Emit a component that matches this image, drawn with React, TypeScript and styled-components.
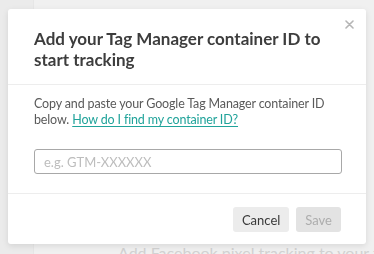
import React from 'react';
import styled, {createGlobalStyle} from 'styled-components';

const App: React.FC = () => {
  return (
    <>
      <GlobalStyle/>
      <Page>
        <SideStrip/>
        <Content>
          <GhostLine>Add Facebook pixel tracking to your typeform</GhostLine>
        </Content>
      </Page>
      <Overlay>
        <Modal>
          <CloseButton aria-label="Close">
            <svg width="9" height="9" viewBox="0 0 9 9">
              <path d="M1 1 L8 8 M8 1 L1 8" stroke="#b5b5b5" strokeWidth="1.6" strokeLinecap="round"/>
            </svg>
          </CloseButton>
          <Header>
            <Title>Add your Tag Manager container ID to start tracking</Title>
          </Header>
          <Body>
            <Text>
              Copy and paste your Google Tag Manager container ID below.{' '}
              <Link href="#">How do I find my container ID?</Link>
            </Text>
            <Input placeholder="e.g. GTM-XXXXXX" autoFocus/>
          </Body>
          <Footer>
            <Button>Cancel</Button>
            <Button $disabled>Save</Button>
          </Footer>
        </Modal>
      </Overlay>
    </>
  );
}

const GlobalStyle = createGlobalStyle`
  body {
    margin: 0;
    font-family: Lato, "Helvetica Neue", Arial, sans-serif;
    -webkit-font-smoothing: antialiased;
  }
`;

const Page = styled.div`
  display: flex;
  width: 374px;
  height: 254px;
  overflow: hidden;
  background: #f0f0f0;
`

const SideStrip = styled.div`
  width: 33px;
  flex: none;
  background: #ebebeb;
  border-right: 1px solid #e6e6e6;
`

const Content = styled.div`
  flex: 1;
  min-width: 0;
  display: flex;
  flex-direction: column;
  justify-content: flex-end;
  padding: 0 0 0 84px;
  overflow: hidden;
`

const GhostLine = styled.div`
  font-size: 16px;
  line-height: 16px;
  height: 9px;
  overflow: hidden;
  color: #d2d2d2;
  white-space: nowrap;
`

const Overlay = styled.div`
  position: fixed;
  inset: 0;
  display: flex;
  align-items: flex-start;
  padding: 9px 0 0 8px;
`

const Modal = styled.div`
  position: relative;
  width: 358px;
  background: #fff;
  border-radius: 3px;
  box-shadow: 0 2px 6px rgba(0, 0, 0, 0.1);
  display: flex;
  flex-direction: column;
`

const CloseButton = styled.button`
  position: absolute;
  top: 11px;
  right: 12px;
  padding: 0;
  border: 0;
  background: none;
  line-height: 0;
  cursor: pointer;
`

const Header = styled.div`
  padding: 19px 20px 14px 26px;
  border-bottom: 1px solid #ededed;
`

const Title = styled.h2`
  margin: 0;
  font-size: 17px;
  line-height: 21px;
  font-weight: 700;
  color: #3d3d3d;
`

const Body = styled.div`
  padding: 11px 25px 19px 26px;
  border-bottom: 1px solid #ededed;
`

const Text = styled.p`
  margin: 0 0 21px;
  font-size: 12.5px;
  letter-spacing: -0.15px;
  line-height: 16px;
  color: #5a5a5a;
`

const Link = styled.a`
  color: #20a39a;
  text-decoration: underline;
  text-underline-offset: 2px;
`

const Input = styled.input`
  box-sizing: border-box;
  display: block;
  width: 308px;
  height: 25px;
  padding: 0 9px;
  border: 1px solid #a8a8a8;
  border-radius: 3px;
  font-family: inherit;
  font-size: 13px;
  color: #333;
  outline: none;
  &::placeholder {
    color: #bdbdbd;
  }
`

const Footer = styled.div`
  display: flex;
  justify-content: flex-end;
  gap: 7px;
  padding: 13px 25px 12px 0;
`

const Button = styled.button<{$disabled?: boolean}>`
  height: 25px;
  padding: 0 9px;
  border: 0;
  border-radius: 3px;
  font-family: inherit;
  font-size: 13px;
  background: ${({$disabled}) => ($disabled ? '#e3e3e3' : '#ececec')};
  color: ${({$disabled}) => ($disabled ? '#adadad' : '#3a3a3a')};
  min-width: ${({$disabled}) => ($disabled ? 43 : 54)}px;
  cursor: ${({$disabled}) => ($disabled ? 'default' : 'pointer')};
`

export default App;
